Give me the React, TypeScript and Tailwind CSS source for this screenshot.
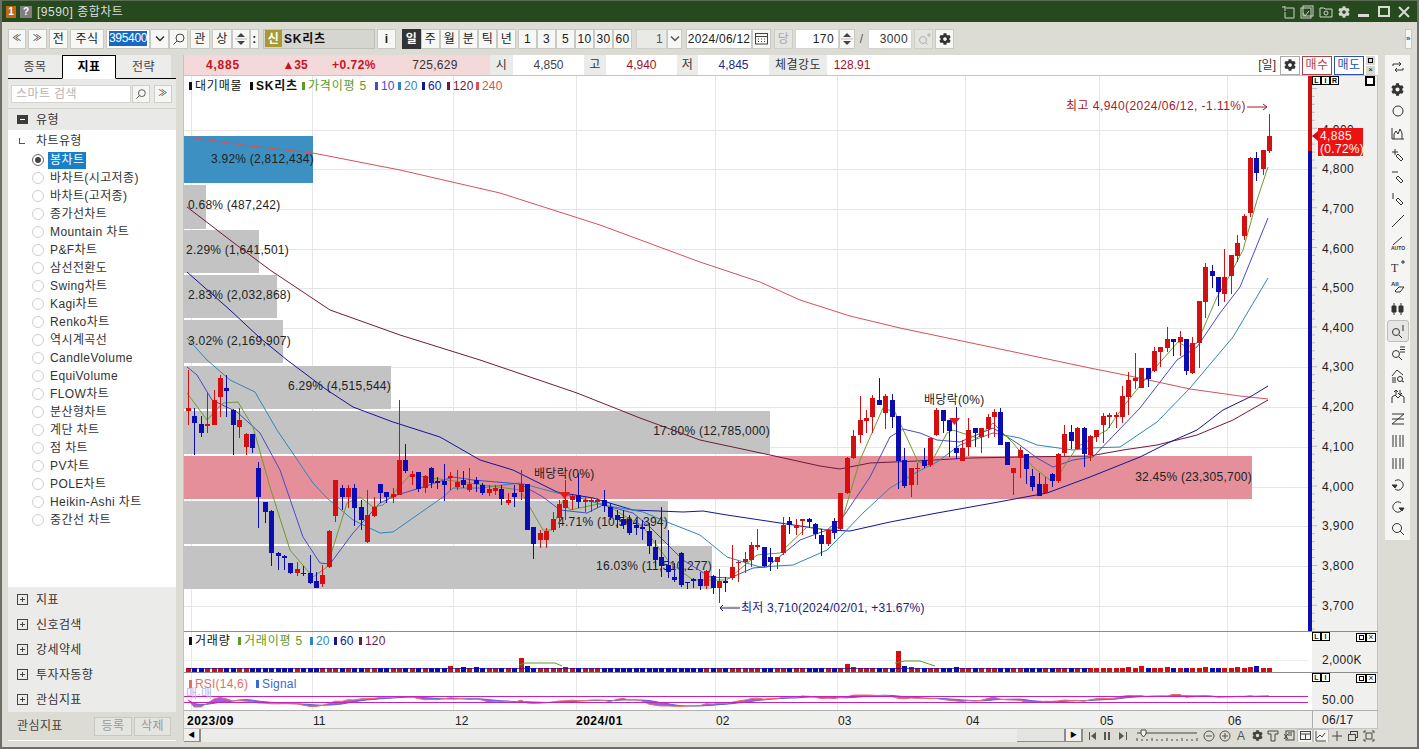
import React from "react";
import { FaCog } from "react-icons/fa";

const cx = (n: number) => Math.round(188 + 6.397 * (n - 1));
type C = { n: number; r: boolean; h: number; t: number; b: number; l: number };
const parse = (y0: number, s: string): Omit<C, "n">[] =>
  s.trim().split(";").filter(Boolean).map((it) => {
    const p = it.trim().split(/\s+/);
    const v = p.slice(1).map((q) => y0 + Number(q) / 3);
    return { r: p[0] === "R", h: v[0], t: v[1], b: v[2], l: v[3] };
  });
const raw = [
  ...parse(360, `R 30 145 153 195;B 145 168 188 285;B 168 192 218 232;R 100 192 193 220;R 90 120 195 195;R 45 53 110 170;B 45 85 93 170;B 148 150 195 285;R 145 180 200 235;R 220 222 260 285;B 222 222 265 278;B 305 323 410 505;B 425 427 455 490;B 450 452 580 618;B 575 578 587 630;B 585 587 593 630;B 608 610 640 642;R 605 628 640 648;B 618 638 642 648;B 585 640 670 672;B 635 663 683 683;R 615 645 672 680;R 510 513 622 625;R 360 360 468 487;B 375 385 410 450;R 375 385 412 445;B 372 383 443 497;B 420 442 480 510;R 390 465 545 548;R 410 440 468 470;B 372 372 398 430;B 395 396 412 430;R 385 402 410 430;R 120 300 405 405;B 252 300 333 340;R 333 343 350 375;B 336 336 388 395;R 345 348 385 398;B 322 324 370 385;B 350 363 367 388;B 312 363 374 422;R 335 349 354 390;R 330 365 380 390;B 332 360 375 385;R 325 372 390 395;B 350 360 373 395;B 368 375 400 405;R 375 388 398 408;R 375 384 392 405;B 375 386 416 435;R 400 421 430 435;B 375 398 410 440;R 330 372 397 420;B 372 372 510 510;B 500 502 552 598;R 510 518 540 565;R 505 512 540 565;R 455 476 510 515;R 420 432 475 505;R 360 420 443 480;R 405 408 420 450;B 340 405 425 445`),
  ...parse(470, `R 80 90 97 125;R 80 90 97 125;R 85 90 93 115;B 60 90 108 125;B 100 110 140 150;B 120 135 150 175;B 120 148 165 178;B 135 148 188 195;B 150 165 175 195;B 150 172 178 210;B 160 183 228 252;B 210 230 270 290;B 110 260 287 320;B 180 285 305 325;B 280 320 330 335;B 245 248 345 350;B 335 335 337 358;B 325 328 332 355;B 305 328 347 360;R 300 303 347 358;B 315 318 353 372;R 298 333 355 400;B 320 332 340 365;R 225 292 325 330;R 272 275 280 335;R 245 268 277 310;R 215 225 270 290;R 178 225 227 240;B 232 232 288 292;B 235 262 275 302;R 262 262 275 298;R 140 165 250 256;B 142 153 165 192;R 148 168 172 195;R 148 148 151 195;B 143 148 155 175;B 158 162 192 208;B 178 195 222 258;R 178 180 222 228;B 145 153 188 208;R 68 68 178 180`),
  ...parse(370, `R 262 265 370 372;R 180 197 265 268;R 78 150 195 218;R 120 143 153 188;R 75 84 140 188;B 25 90 104 104;R 72 78 130 178;B 72 90 140 175;B 138 138 272 358;B 235 270 348 355;R 295 295 345 382;R 280 293 295 345;B 235 270 288 295;R 205 205 285 290;R 115 120 195 198;B 120 120 152 190;B 150 150 183 260;B 110 235 248 268;R 210 235 272 272;R 145 180 230 258;B 175 175 190 230;R 175 175 200 248;R 132 140 178 205;R 118 125 140 200;B 115 125 225 225;B 215 215 285 285;R 295 295 308 375;R 230 240 265 325;B 252 252 296 342;B 296 318 352 362;B 310 342 378 378;R 320 343 370 370;B 310 312 333 350;R 250 252 332 338;R 165 192 248 258;B 165 186 212 238;R 170 175 236 238;B 170 175 253 290;R 195 198 256 272`),
  ...parse(100, `R 990 990 1010 1025;R 938 948 975 1030;R 938 946 949 985;R 935 946 949 985;R 858 888 950 968;R 815 840 890 945;R 760 835 842 868;R 805 805 865 865;B 805 805 838 860;R 742 753 812 815;R 740 742 755 800;R 682 717 745 757;B 718 718 725 768;R 693 712 725 768;B 718 718 812 825;R 712 730 820 822;R 603 603 730 805;R 490 502 605 655;B 495 513 527 565;B 532 532 575 618;R 448 532 582 605;R 465 465 527 582;R 405 430 468 485;R 343 348 408 420;R 172 175 340 350;B 155 175 218 243;R 150 150 207 225;R 42 108 152 158`),
];
const candles: C[] = raw.map((c, i) => ({ ...c, n: i + 1 }));

const ma240 = "188,137 250,146 313,153 400,170 500,193 600,225 700,262 760,282 800,300 850,316 900,328 1000,349 1090,368 1130,376 1190,389 1240,396 1268,399";
const ma120 = "187,207 230,240 270,270 330,310 400,335 480,360 577,393 640,418 700,440 770,455 820,466 840,469 870,463 917,461 970,458 1020,457 1090,456 1123,450 1157,445 1197,435 1233,420 1268,400";
const ma60 = "187,272 230,310 260,338 287,360 327,390 353,407 393,422 440,437 480,460 513,470 557,492 593,498 633,510 683,512 703,511 727,515 780,523 827,530 850,531 890,522 937,513 993,503 1047,493 1090,477 1140,457 1170,442 1197,430 1223,410 1250,397 1268,386";
const ma20 = "187,338 207,360 230,380 255,392 277,430 313,483 327,498 353,520 380,533 393,532 413,518 443,497 453,488 480,488 520,483 557,493 580,498 603,505 643,512 667,522 700,535 727,557 760,567 793,565 827,550 837,540 863,513 890,488 917,472 937,462 960,445 993,433 1020,438 1037,445 1073,450 1090,448 1120,447 1157,422 1190,388 1233,337 1268,278";
const ma10 = "187,367 197,375 212,400 237,412 260,433 280,470 303,537 320,563 330,564 353,533 380,503 397,495 420,488 453,477 473,480 520,484 543,497 560,510 587,513 603,505 633,513 650,527 683,560 710,577 730,578 753,568 767,567 800,540 827,530 843,517 870,477 890,437 903,429 920,433 937,440 960,442 993,428 1017,443 1037,458 1053,467 1073,460 1093,457 1140,408 1177,360 1197,347 1220,313 1240,287 1268,218";
const ma5 = "187,393 207,420 223,403 238,402 253,427 270,487 290,550 313,577 327,567 347,503 360,497 373,507 383,505 410,475 447,480 520,490 543,530 552,530 563,500 570,510 603,503 643,527 670,563 693,580 727,580 757,555 780,553 807,527 827,530 840,527 860,460 883,408 895,412 918,462 930,465 947,433 953,430 977,438 993,423 1013,443 1033,467 1050,480 1060,473 1077,447 1107,430 1123,407 1147,377 1178,342 1187,347 1197,343 1217,297 1230,275 1243,250 1257,200 1268,167";

const bands = [
  { y: 136, h: 47, x2: 313, c: "#3d91c2" },
  { y: 185, h: 44, x2: 206, c: "#c3c3c3" },
  { y: 230, h: 43, x2: 259, c: "#c3c3c3" },
  { y: 275, h: 43, x2: 277, c: "#c3c3c3" },
  { y: 320, h: 43, x2: 283, c: "#c3c3c3" },
  { y: 366, h: 43, x2: 391, c: "#c3c3c3" },
  { y: 411, h: 43, x2: 770, c: "#c3c3c3" },
  { y: 456, h: 43, x2: 1252, c: "#e48f9a" },
  { y: 501, h: 43, x2: 668, c: "#c3c3c3" },
  { y: 546, h: 43, x2: 712, c: "#c3c3c3" },
];
const bandLabels: [number, number, string, "start" | "end"][] = [
  [211, 163, "3.92% (2,812,434)", "start"],
  [188, 209, "0.68% (487,242)", "start"],
  [186, 254, "2.29% (1,641,501)", "start"],
  [188, 299, "2.83% (2,032,868)", "start"],
  [188, 345, "3.02% (2,169,907)", "start"],
  [391, 390, "6.29% (4,515,544)", "end"],
  [770, 435, "17.80% (12,785,000)", "end"],
  [1252, 481, "32.45% (23,305,700)", "end"],
  [668, 526, "4.71% (10,564,394)", "end"],
  [712, 570, "16.03% (11,510,277)", "end"],
];
const vgrid = [191, 312, 453, 576, 715, 837, 965, 1099, 1227];
const hgrid = [130, 169, 209, 249, 288, 328, 367, 407, 447, 487, 526, 566, 606];
const prices: [string, number][] = [["4,900", 130], ["4,800", 169], ["4,700", 209], ["4,600", 249], ["4,500", 288], ["4,400", 328], ["4,300", 367], ["4,200", 407], ["4,100", 447], ["4,000", 487], ["3,900", 526], ["3,800", 566], ["3,700", 606]];

const vols: Record<number, number> = { 42: 6, 44: 5, 46: 5, 53: 14, 54: 6, 60: 5, 104: 8, 105: 5, 112: 21, 113: 6, 114: 5, 121: 5, 148: 5, 150: 6, 154: 5, 160: 5, 165: 5, 167: 5, 168: 6 };

function rsiLines() {
  const cl = candles.map((c) => -(c.r ? c.t : c.b));
  const r: number[] = [];
  for (let i = 0; i < cl.length; i++) {
    let u = 0, d = 0;
    for (let j = Math.max(1, i - 13); j <= i; j++) {
      const x = cl[j] - cl[j - 1];
      if (x > 0) u += x; else d -= x;
    }
    r.push(u + d === 0 ? 50 : (100 * u) / (u + d));
  }
  const s = r.map((_, i) => {
    const a = r.slice(Math.max(0, i - 5), i + 1);
    return a.reduce((p, q) => p + q, 0) / a.length;
  });
  const y = (v: number) => Math.max(694, Math.min(708, 700 - (v - 50) * 0.14));
  return { r: candles.map((c, i) => [cx(c.n), y(r[i])]), s: candles.map((c, i) => [cx(c.n), y(s[i])]) };
}

function Btn({ w, children, dark, muted }: { w: string; children?: React.ReactNode; dark?: boolean; muted?: boolean }) {
  return (
    <div className={`${w} h-[20px] shrink-0 flex items-center justify-center border text-[12px] ${dark ? "bg-[#333333] border-[#333333] text-white font-bold" : muted ? "bg-[#e4e4e0] border-[#cfcfca] text-[#aaaaaa]" : "bg-[#f7f7f5] border-[#c9c9c4] text-[#222222]"}`}>
      {children}
    </div>
  );
}
const Mag = ({ s = 14 }: { s?: number }) => (
  <svg width={s} height={s} viewBox="0 0 14 14" fill="none" stroke="#444" strokeWidth="1"><circle cx="8" cy="6" r="4" /><path d="M5 9 1.5 12.5" /></svg>
);
const Chev = ({ c = "#333" }: { c?: string }) => (
  <svg width="10" height="7" viewBox="0 0 10 7" fill="none" stroke={c} strokeWidth="1.5"><path d="M1 1.5 5 5.5 9 1.5" /></svg>
);
const UpDown = () => (
  <svg width="12" height="16" viewBox="0 0 12 16" fill="#444"><path d="M6 2 10 6H2Z" /><path d="M6 14 2 10H10Z" /><path d="M0 8H12" stroke="#bbb" /></svg>
);
const Plus = () => (
  <svg width="11" height="11" viewBox="0 0 11 11" fill="none" stroke="#444"><rect x=".5" y=".5" width="10" height="10" /><path d="M3 5.500H8M5.500 3V8" /></svg>
);

const treeItems = ["봉차트", "바차트(시고저종)", "바차트(고저종)", "종가선차트", "Mountain 차트", "P&F차트", "삼선전환도", "Swing차트", "Kagi차트", "Renko차트", "역시계곡선", "CandleVolume", "EquiVolume", "FLOW차트", "분산형차트", "계단 차트", "점 차트", "PV차트", "POLE차트", "Heikin-Ashi 차트", "중간선 차트"];

function LeftPanel() {
  return (
    <div className="w-[168px] ml-[6px] shrink-0 flex flex-col text-[12px] text-[#333333] tracking-[0.4px]">
      <div className="h-[24px] flex border-b border-black">
        <div className="w-[54px] bg-[#ececea] flex items-center justify-center text-[#444444]">종목</div>
        <div className="w-[54px] h-[24px] bg-white border border-black border-b-white flex items-center justify-center font-bold text-black">지표</div>
        <div className="w-[55px] bg-[#ececea] flex items-center justify-center text-[#444444]">전략</div>
      </div>
      <div className="h-[29px] bg-[#e8e8e6] flex items-center pl-[3px] gap-[1px]">
        <div className="w-[120px] h-[18px] bg-white border border-[#d4d4d0] flex items-center pl-[4px] text-[#b4b4b4]">스마트 검색</div>
        <div className="w-[18px] h-[18px] bg-[#f6f6f4] border border-[#cfcfca] flex items-center justify-center"><Mag s={12} /></div>
        <div className="w-[18px] h-[18px] ml-[3px] bg-[#f6f6f4] border border-[#cfcfca] flex items-center justify-center text-[9px] leading-none">≫</div>
      </div>
      <div className="h-[22px] bg-[#e9e9e7] border-t border-[#d0d0cc] flex items-center pl-[9px] gap-[8px]">
        <div className="relative w-[11px] h-[9px] bg-[#3c3c3c] flex items-center justify-center"><div className="w-[5px] h-[1px] bg-white" /></div>
        <span>유형</span>
      </div>
      <div className="h-[457px] bg-white flex flex-col">
        <div className="h-[21px] pt-[1px] flex items-center pl-[11px] gap-[8px]">
          <div className="w-[6px] h-[6px] border-l border-b border-[#555555]" />
          <span className="ml-[3px]">차트유형</span>
        </div>
        {treeItems.map((t, i) => (
          <div key={t} className="h-[18px] shrink-0 flex items-center pl-[24px]">
            <div className={`w-[12px] h-[12px] rounded-full border flex items-center justify-center ${i === 0 ? "border-[#666666]" : "border-[#cfcfcf]"}`}>
              {i === 0 && <div className="w-[6px] h-[6px] rounded-full bg-[#444444]" />}
            </div>
            <span className={`ml-[4px] px-[2px] leading-[17px] ${i === 0 ? "bg-[#1a7fc9] text-white" : ""}`}>{t}</span>
          </div>
        ))}
      </div>
      <div className="h-[125px] bg-[#ebebe9] flex flex-col">
        {["지표", "신호검색", "강세약세", "투자자동향", "관심지표"].map((t) => (
          <div key={t} className="h-[25px] flex items-center pl-[9px] gap-[8px]"><Plus /><span>{t}</span></div>
        ))}
      </div>
      <div className="h-[28px] bg-[#dcdcd5] flex items-center pl-[9px] text-[#444444]">
        <span className="w-[47px] shrink-0 whitespace-nowrap">관심지표</span>
        <div className="ml-[30px] flex gap-[2px]">
          <div className="w-[38px] h-[19px] border border-[#c8c8c4] bg-[#e4e4e0] text-[#999999] flex items-center justify-center">등록</div>
          <div className="w-[37px] h-[19px] border border-[#c8c8c4] bg-[#e4e4e0] text-[#999999] flex items-center justify-center">삭제</div>
        </div>
      </div>
      <div className="h-[1px] bg-white" />
    </div>
  );
}

function TitleBar() {
  return (
    <div className="h-[22px] shrink-0 bg-[#264a1e] border-t border-[#5b6b55] flex items-center pl-[4px] pr-[7px] text-[12px] text-[#dddddd]">
      <div className="w-[10px] h-[12px] bg-[#c06a10] text-white font-bold text-[10px] flex items-center justify-center">1</div>
      <div className="w-[12px] h-[12px] ml-[4px] bg-[#808080] text-white font-bold text-[10px] flex items-center justify-center">?</div>
      <span className="ml-[5px] tracking-[0.5px]">[9590] 종합차트</span>
      <div className="ml-auto flex items-center gap-[5px]">
        <svg width="14" height="14" viewBox="0 0 14 14" fill="none" stroke="#cfd4cc"><path d="M1 2h3M4 1v5M5 3h8v10H4V7" /></svg>
        <svg width="14" height="14" viewBox="0 0 14 14" fill="none" stroke="#cfd4cc"><rect x="3" y="1" width="10" height="10" /><rect x="1" y="3" width="10" height="10" /><path d="m3 8 2 3 4-5" /></svg>
        <svg width="14" height="14" viewBox="0 0 14 14" fill="none" stroke="#cfd4cc"><path d="M1 3h4l1 1h7v8H1Z" /><circle cx="7" cy="8" r="2" /></svg>
        <FaCog size={12} color="#cfd4cc" />
        <svg className="ml-[3px]" width="12" height="12" viewBox="0 0 12 12" fill="#d8dcd4"><rect y="8" width="11" height="3" /></svg>
        <svg className="ml-[3px]" width="12" height="12" viewBox="0 0 12 12" fill="none" stroke="#d8dcd4" strokeWidth="2"><rect x="1" y="1" width="10" height="9" /></svg>
        <svg className="ml-[3px]" width="12" height="12" viewBox="0 0 12 12" fill="none" stroke="#d8dcd4" strokeWidth="2"><path d="M1 1 11 11M11 1 1 11" /></svg>
      </div>
    </div>
  );
}

function Toolbar() {
  return (
    <div className="h-[33px] shrink-0 flex items-center pl-[6px] pr-[5px] tracking-[0.4px]">
      <div className="flex items-center gap-[2px]">
        <Btn w="w-[18px]"><span className="text-[9px]">≪</span></Btn>
        <Btn w="w-[19px]"><span className="text-[9px]">≫</span></Btn>
        <Btn w="w-[19px]">전</Btn>
        <Btn w="w-[34px]">주식</Btn>
      </div>
      <div className="w-[44px] h-[20px] ml-[2px] bg-white border border-[#c9c9c4] flex items-center pl-[2px] overflow-hidden shrink-0">
        <span className="bg-[#1668c8] text-white text-[12px] leading-[15px] tracking-[-0.3px]">395400</span>
      </div>
      <Btn w="w-[19px]"><Chev /></Btn>
      <Btn w="w-[19px]"><Mag /></Btn>
      <div className="flex items-center gap-[2px] ml-[2px]">
        <Btn w="w-[20px]">관</Btn>
        <Btn w="w-[20px]">상</Btn>
      </div>
      <Btn w="w-[18px]"><UpDown /></Btn>
      <Btn w="w-[9px]"><span className="font-bold leading-none">:</span></Btn>
      <div className="w-[112px] h-[20px] ml-[4px] shrink-0 bg-[#d6d6d0] border border-[#c0c0ba] flex items-center pl-[1px] gap-[2px] text-[12px]">
        <div className="w-[17px] h-[17px] bg-[#a89a32] text-white font-bold flex items-center justify-center">신</div>
        <span className="font-bold text-[#111111] tracking-[0.8px]">SK리츠</span>
      </div>
      <div className="ml-[2px] flex"><Btn w="w-[19px]"><span className="font-bold">i</span></Btn></div>
      <div className="ml-[6px] flex">
        <Btn w="w-[19px]" dark>일</Btn>
        <Btn w="w-[19px]">주</Btn>
        <Btn w="w-[19px]">월</Btn>
        <Btn w="w-[19px]">분</Btn>
        <Btn w="w-[19px]">틱</Btn>
        <Btn w="w-[19px]">년</Btn>
      </div>
      <div className="ml-[2px] flex">
        {["1", "3", "5", "10", "30", "60"].map((t) => <Btn key={t} w="w-[19px]">{t}</Btn>)}
      </div>
      <div className="w-[31px] h-[20px] ml-[4px] shrink-0 bg-[#e9e9e6] border border-[#d0d0cc] flex items-center justify-end pr-[3px] text-[12px] text-[#555555]">1</div>
      <Btn w="w-[15px]"><Chev c="#555" /></Btn>
      <div className="w-[66px] h-[20px] ml-[4px] shrink-0 bg-white border border-[#c9c9c4] flex items-center justify-center text-[12px] text-[#222222] tracking-[0.25px]">2024/06/12</div>
      <Btn w="w-[19px]">
        <svg width="13" height="13" viewBox="0 0 13 13" fill="none" stroke="#444"><rect x=".5" y="1.5" width="12" height="10.5" /><path d="M.5 4.5h12M3 7h1M6 7h1M9 7h1M3 9.500h1M6 9.500h1M9 9.500h1" /></svg>
      </Btn>
      <div className="ml-[3px] flex"><Btn w="w-[19px]" muted>당</Btn></div>
      <div className="w-[44px] h-[20px] ml-[2px] shrink-0 bg-white border border-[#d4d4d0] flex items-center justify-end pr-[4px] text-[12px] text-[#222222]">170</div>
      <Btn w="w-[16px]"><UpDown /></Btn>
      <span className="w-[13px] text-center text-[12px] text-[#555555]">/</span>
      <div className="w-[44px] h-[20px] shrink-0 bg-white border border-[#d4d4d0] flex items-center justify-end pr-[3px] text-[12px] text-[#333333]">3000</div>
      <div className="ml-[2px] flex">
        <Btn w="w-[19px]" muted>
          <svg width="14" height="14" viewBox="0 0 14 14" fill="none" stroke="#b0b0b0"><circle cx="6" cy="8" r="3.500" /><path d="m8.500 10.500 2 2M10 3h4M12 1v4" /></svg>
        </Btn>
      </div>
      <div className="ml-[2px] flex"><Btn w="w-[19px]"><FaCog size={12} color="#333" /></Btn></div>
      <div className="ml-auto w-[7px] h-[20px] bg-[#f7f7f5] border border-[#c9c9c4] text-[8px] flex items-center justify-center">»</div>
    </div>
  );
}

function InfoRow() {
  const Lab = ({ w, t }: { w: string; t: string }) => <div className={`${w} h-full bg-[#ebebe9] flex items-center justify-center text-[#333333] tracking-[0.5px]`}>{t}</div>;
  const Val = ({ w, t, c }: { w: string; t: string; c: string }) => <div className={`${w} h-full flex items-center justify-center ${c}`}>{t}</div>;
  return (
    <div className="h-[21px] shrink-0 flex items-center bg-white border-b border-[#c4c4c0] text-[12px]">
      <div className="w-[306px] h-full bg-[#f4d9da] flex items-center">
        <span className="w-[78px] text-center font-bold text-[#c8141e] tracking-[0.8px]">4,885</span>
        <span className="w-[58px] text-center font-bold text-[#c8141e] pl-[8px]">▲35</span>
        <span className="w-[68px] text-center font-bold text-[#c8141e] tracking-[0.5px]">+0.72%</span>
        <span className="w-[74px] text-center text-[#333333] tracking-[0.3px] pl-[20px]">725,629</span>
      </div>
      <Lab w="w-[23px]" t="시" />
      <Val w="w-[71px]" t="4,850" c="text-[#444444]" />
      <Lab w="w-[22px]" t="고" />
      <Val w="w-[71px]" t="4,940" c="text-[#a01028]" />
      <Lab w="w-[21px]" t="저" />
      <Val w="w-[71px]" t="4,845" c="text-[#1a2a90]" />
      <Lab w="w-[58px]" t="체결강도" />
      <Val w="w-[50px]" t="128.91" c="text-[#a01028]" />
      <div className="ml-auto flex items-center h-full">
        <span className="text-[#333333] mr-[4px]">[일]</span>
        <div className="w-[20px] h-[19px] border border-[#aaaaaa] flex items-center justify-center"><FaCog size={12} color="#333" /></div>
        <div className="w-[30px] h-[19px] ml-[2px] border border-[#b04048] text-[#b04048] flex items-center justify-center tracking-[0.5px]">매수</div>
        <div className="w-[30px] h-[19px] ml-[2px] border border-[#2a50b0] text-[#2a50b0] flex items-center justify-center tracking-[0.5px]">매도</div>
        <div className="w-[10px] ml-[2px] mr-[2px] flex flex-col gap-[1px]">
          <div className="w-[9px] h-[9px] bg-[#d8d8d4] flex items-center justify-center"><div className="w-[5px] h-[5px] border border-black" /></div>
          <div className="w-[9px] h-[9px] bg-[#d8d8d4] text-[8px] leading-none flex items-center justify-center">×</div>
        </div>
      </div>
    </div>
  );
}

const LIR = ({ t }: { t: string[] }) => (
  <div className="absolute left-0 top-0 flex">
    {t.map((x) => <div key={x} className="w-[9px] h-[9px] border border-black bg-white text-[7px] font-bold leading-none flex items-center justify-center">{x}</div>)}
  </div>
);
const BoxX = () => (
  <div className="absolute right-[1px] top-[1px] flex">
    <div className="w-[10px] h-[9px] border border-black bg-white flex items-center justify-center"><div className="w-[5px] h-[5px] border border-black" /></div>
    <div className="w-[10px] h-[9px] border border-black bg-white text-[9px] leading-none flex items-center justify-center">×</div>
  </div>
);

function Legend({ items, y }: { items: { t: string; c: string; x: number; b?: boolean; k?: boolean }[]; y: number }) {
  return (
    <g>
      {items.map((it) => (
        <g key={it.t}>
          <rect x={it.x} y={y - 8} width="3" height="8" fill={it.c} />
          <text x={it.x + 6} y={y} fill={it.c} fontWeight={it.b ? 700 : 400} fontSize="12" className={it.k ? "tracking-[0.8px]" : "tracking-[0.2px]"}>{it.t}</text>
        </g>
      ))}
    </g>
  );
}

function MainChart() {
  return (
    <div className="h-[555px] shrink-0 flex">
      <svg width="1128" height="555" viewBox="184 76 1128 555" className="block shrink-0">
        <rect x="184" y="76" width="1128" height="555" fill="#fff" />
        {hgrid.map((y) => <path key={y} d={`M184 ${y + .5}H1308`} stroke="#e6e6e6" />)}
        {vgrid.map((x) => <path key={x} d={`M${x + .5} 76V631`} stroke="#e6e6e6" />)}
        {bands.map((b) => <rect key={b.y} x="184" y={b.y} width={b.x2 - 184} height={b.h} fill={b.c} />)}
        <g fontSize="12" fill="#222" className="tracking-[0.25px]">
          {bandLabels.map(([x, y, t, a]) => <text key={t} x={x} y={y} textAnchor={a}>{t}</text>)}
        </g>
        <g fill="none" strokeWidth="1">
          <polyline points={ma240} stroke="#d8505a" />
          <polyline points={ma120} stroke="#6e1a3e" />
          <polyline points={ma60} stroke="#14149a" />
          <polyline points={ma20} stroke="#2f86b8" />
          <polyline points={ma10} stroke="#4a4ac8" />
          <polyline points={ma5} stroke="#6f9a2e" />
        </g>
        <g shapeRendering="crispEdges">
          {candles.map((c) => {
            const x = cx(c.n);
            const col = c.r ? "#d40f0f" : "#0c0cb4";
            return (
              <g key={c.n}>
                <rect x={x} y={c.h} width="1" height={Math.max(1, c.l - c.h)} fill={col} />
                <rect x={x - 2} y={c.t} width="5" height={Math.max(1.5, c.b - c.t)} fill={col} />
              </g>
            );
          })}
        </g>
        <path d="M559 492h11l-5.500 7Z" fill="#e81818" />
        <path d="M949 418h11l-5.500 7Z" fill="#e81818" />
        <g fontSize="12">
          <text x="534" y="478" fill="#222" className="tracking-[0.3px]">배당락(0%)</text>
          <text x="924" y="404" fill="#222" className="tracking-[0.3px]">배당락(0%)</text>
          <text x="1066" y="110" fill="#a01c2c" className="tracking-[0.45px]">최고 4,940(2024/06/12, -1.11%)</text>
          <text x="741" y="612" fill="#1c1c80" className="tracking-[0.2px]">최저 3,710(2024/02/01, +31.67%)</text>
        </g>
        <path d="M1247 107h20m-4-3 4 3-4 3" fill="none" stroke="#a01c2c" />
        <path d="M720 608h20m-17-3-3 3 3 3" fill="none" stroke="#1c1c80" />
        <Legend y={90} items={[{ t: "대기매물", c: "#111", x: 189, k: true }, { t: "SK리츠", c: "#111", x: 250, b: true, k: true }, { t: "가격이평 5", c: "#5d9a2a", x: 302, k: true }, { t: "10", c: "#4a4ac8", x: 375 }, { t: "20", c: "#2f86c0", x: 398 }, { t: "60", c: "#14149a", x: 422 }, { t: "120", c: "#6e1a3e", x: 447 }, { t: "240", c: "#d8505a", x: 476 }]} />
        <rect x="1308" y="76" width="4" height="75" fill="#cc1014" />
        <rect x="1308" y="151" width="4" height="480" fill="#0c0cb0" />
      </svg>
      <div className="relative w-[66px] shrink-0 bg-[#f0f0ee] border-r border-[#c4c4c0]">
        <svg width="66" height="555" viewBox="1312 76 66 555" className="block">
          {Array.from({ length: 69 }).map((_, i) => <path key={i} d={`M1312 ${88.500 + i * 7.95}h${i % 5 === 0 ? 5 : 3}`} stroke="#bcbcbc" />)}
          <g fontSize="12" fill="#222" className="tracking-[0.4px]">
            {prices.map(([t, y]) => <text key={t} x="1322" y={y + 4}>{t}</text>)}
          </g>
          <rect x="1318" y="128" width="45" height="28" fill="#ee1111" />
          <path d="M1312 136l6-5v10Z" fill="#cc1014" />
          <text x="1320" y="140" fontSize="12" fill="#fff" className="tracking-[0.4px]">4,885</text>
          <text x="1320" y="153" fontSize="12" fill="#fff" className="tracking-[0.3px]">(0.72%)</text>
        </svg>
        <LIR t={["L", "I", "R"]} />
        <div className="absolute right-[2px] top-0 w-[10px] h-[10px] border-2 border-black bg-white" />
      </div>
    </div>
  );
}

function VolumePane() {
  return (
    <div className="h-[41px] shrink-0 flex border-t border-[#8c8c8c]">
      <svg width="1128" height="40" viewBox="184 632 1128 40" className="block shrink-0">
        <rect x="184" y="632" width="1128" height="40" fill="#fff" />
        {vgrid.map((x) => <path key={x} d={`M${x + .5} 632V672`} stroke="#e6e6e6" />)}
        <path d="M184 660.500H1308" stroke="#eeeeee" />
        <g shapeRendering="crispEdges">
          {candles.map((c) => {
            const h = vols[c.n] ?? 4;
            const red = c.r || h > 10;
            return <rect key={c.n} x={cx(c.n) - 2} y={672 - h} width="5" height={h} fill={red ? "#d40f0f" : "#0c0cb4"} />;
          })}
        </g>
        <path d="M187 668.500H1090" stroke="#14149a" opacity=".7" />
        <path d="M519 665 525 663H555L562 666M895 663 905 661H920L935 666" fill="none" stroke="#5d9a2a" />
        <Legend y={645} items={[{ t: "거래량", c: "#111", x: 189, k: true }, { t: "거래이평 5", c: "#5d9a2a", x: 238, k: true }, { t: "20", c: "#2f86c0", x: 310 }, { t: "60", c: "#14149a", x: 334 }, { t: "120", c: "#6e1a3e", x: 359 }]} />
      </svg>
      <div className="relative w-[66px] shrink-0 bg-[#f0f0ee] border-r border-[#c4c4c0] text-[12px] text-[#222222]">
        <LIR t={["L", "I"]} />
        <BoxX />
        <span className="absolute left-[10px] top-[19px] tracking-[0.3px]">2,000K</span>
      </div>
    </div>
  );
}

function RsiPane() {
  const { r, s } = rsiLines();
  const poly = [...r, ...[...s].reverse()].map((p) => p.join(",")).join(" ");
  return (
    <div className="h-[38px] shrink-0 flex border-t border-[#8c8c8c]">
      <svg width="1128" height="37" viewBox="184 673 1128 37" className="block shrink-0">
        <rect x="184" y="673" width="1128" height="37" fill="#fff" />
        {vgrid.map((x) => <path key={x} d={`M${x + .5} 673V710`} stroke="#e6e6e6" />)}
        <polygon points={poly} fill="#9a60e0" />
        <polyline points={s.map((p) => p.join(",")).join(" ")} fill="none" stroke="#4a6ad0" />
        <polyline points={r.map((p) => p.join(",")).join(" ")} fill="none" stroke="#e8705a" />
        <path d="M184 696.500H1308M184 702.500H1308" stroke="#c820c0" />
        <text x="186" y="698" fontSize="12" fill="#b8b8ec">매·매</text>
        <Legend y={688} items={[{ t: "RSI(14,6)", c: "#e8705a", x: 189 }, { t: "Signal", c: "#3a6ad0", x: 256 }]} />
      </svg>
      <div className="relative w-[66px] shrink-0 bg-[#f0f0ee] border-r border-[#c4c4c0] text-[12px] text-[#222222]">
        <LIR t={["L", "I"]} />
        <BoxX />
        <span className="absolute left-[10px] top-[18px] tracking-[0.4px]">50.00</span>
      </div>
    </div>
  );
}

function TimeAxis() {
  const labels: [string, string, boolean][] = [["2023/09", "left-[3px]", true], ["11", "left-[129px]", false], ["12", "left-[271px]", false], ["2024/01", "left-[392px]", true], ["02", "left-[532px]", false], ["03", "left-[654px]", false], ["04", "left-[782px]", false], ["05", "left-[916px]", false], ["06", "left-[1044px]", false]];
  return (
    <div className="h-[18px] shrink-0 flex border-t border-[#b0b0b0]">
      <div className="relative w-[1128px] shrink-0 bg-[#efefed] text-[12px] text-[#222222]">
        {labels.map(([t, l, b]) => <span key={t} className={`absolute top-[1px] ${l} ${b ? "font-bold text-black tracking-[0.5px]" : ""}`}>{t}</span>)}
      </div>
      <div className="w-[66px] shrink-0 bg-[#efefed] border-l border-[#b0b0b0] border-r border-r-[#c4c4c0] text-[12px] text-[#222222] flex items-center pl-[9px] tracking-[0.3px]">06/17</div>
    </div>
  );
}

function ScrollBar() {
  const sq = "w-[16px] h-[14px] shrink-0 flex items-center justify-center";
  return (
    <div className="h-[14px] shrink-0 flex items-center bg-[#dcdcd5] border-t border-[#c4c4c0] overflow-hidden">
      <div className="w-[17px] h-full bg-[#f0f0ee] border-r-2 border-b border-[#8c8c88] flex items-center justify-center text-[7px] text-black">◀</div>
      <div className="w-[816px] h-full bg-[#ebebe9]" />
      <div className="w-[49px] h-full bg-[#e4e4e0] border-r-2 border-b border-[#8c8c88]" />
      <div className="w-[17px] h-full bg-[#f0f0ee] border-r-2 border-b border-[#8c8c88] flex items-center justify-center text-[7px] text-black">▶</div>
      <div className="ml-[2px] flex items-center">
        <svg width="60" height="12" viewBox="0 0 60 12" fill="#555" className="mr-[1px]">
          <path d="M4 2h1v8H4ZM11 2 6 6l5 4Z" /><path d="M19 2h2v8h-2ZM23 2h2v8h-2Z" /><path d="M34 2l5 4-5 4ZM41 2h1v8h-1Z" />
        </svg>
        <svg width="66" height="13" viewBox="0 0 66 13" fill="none" stroke="#444" className="-ml-[11px]">
          <path d="M2 4H62" /><path d="M6 1h5v4l-2.500 3L6 5Z" fill="#f4f4f4" /><path d="M2 12V9M7 12v-2M12 12v-2M17 12V9M22 12v-2M27 12v-2M32 12V9M37 12v-2M42 12v-2M47 12V9M52 12v-2M57 12v-2M62 12V9" />
        </svg>
      </div>
      <div className="flex items-center text-[#555555]">
        <div className={sq}><svg width="12" height="12" viewBox="0 0 12 12" fill="none" stroke="#555"><circle cx="6" cy="6" r="5" /><path d="M3 6h6" /></svg></div>
        <div className={sq}><svg width="12" height="12" viewBox="0 0 12 12" fill="none" stroke="#555"><circle cx="6" cy="6" r="5" /><path d="M3 6h6M6 3v6" /></svg></div>
        <div className={`${sq} text-[12px]`}>A</div>
        <div className={sq}><FaCog size={11} color="#444" /></div>
        <div className={sq}><svg width="12" height="12" viewBox="0 0 12 12" fill="none" stroke="#444"><path d="M1 1h10v3H8v7H4V4H1Z" /></svg></div>
        <div className={sq}><svg width="12" height="12" viewBox="0 0 12 12" fill="none" stroke="#444"><rect x="3" y="1" width="8" height="9" /><path d="M5 3h4M5 5h4M1 4l4 5M5 4 1 9" /></svg></div>
        <div className={`${sq} bg-[#f4f4f2] border border-[#c0c0bc]`}><svg width="11" height="11" viewBox="0 0 11 11" fill="none" stroke="#444"><rect x=".5" y="1.500" width="10" height="8" /><path d="M.5 4h10M5.500 4v5" /></svg></div>
        <div className={`${sq} bg-[#f4f4f2] border border-[#c0c0bc]`}><svg width="12" height="12" viewBox="0 0 12 12" fill="none" stroke="#444"><path d="M1 11h10M1 1v10M2 8l3-3 2 2 3-4" /></svg></div>
        <div className={sq}><svg width="12" height="12" viewBox="0 0 12 12" fill="none" stroke="#444"><path d="M6 1v10M1 6h10" /></svg></div>
        <div className={sq}><svg width="12" height="12" viewBox="0 0 12 12" fill="none" stroke="#444"><rect x="3.500" y="1.500" width="7" height="6" /><rect x="1.500" y="4.500" width="7" height="6" fill="#dcdcd5" /></svg></div>
        <div className={sq}><svg width="12" height="12" viewBox="0 0 12 12" fill="none" stroke="#444"><path d="M1 3V1h2M9 1h2v2M11 9v2H9M3 11H1V9" /><rect x="3" y="3" width="6" height="6" /></svg></div>
      </div>
    </div>
  );
}

const toolIcons: React.ReactNode[] = [
  <path d="M3 7V5h8M9 3l2 2-2 2M13 9v2H5M7 13l-2-2 2-2" />,
  <g />,
  <circle cx="8" cy="8" r="5" />,
  <path d="M2 14h12M2 14V3M4 14V9l2-3 2 3 2-5 2 4v6" />,
  <path d="M2 5h6M5 2v6M8 7l5 5-2 2-5-5Z" />,
  <path d="M2 3h6M8 7l5 5-2 2-5-5Z" />,
  <path d="M3 2v6M8 7l5 5-2 2-5-5Z" />,
  <path d="M2 14 14 2" />,
  <><path d="M3 10 12 2" /><text x="1" y="15" fontSize="5" stroke="none" fill="#333" fontWeight="700">AUTO</text></>,
  <><text x="1" y="15" fontSize="12" stroke="none" fill="#333" fontFamily="Liberation Serif">T</text><path d="M11 5h4M13 3v4" /></>,
  <><text x="1" y="7" fontSize="6" stroke="none" fill="#333" fontWeight="700">All</text><path d="M5 12l4-4h5l-4 5H6Z" /></>,
  <path d="M4 2v12M11 2v12M2 5h4v6H2ZM9 5h4v6H9Z" fill="#333" />,
  <><circle cx="6" cy="9" r="3.500" /><path d="m9 12 3 3M13 2v6" /></>,
  <><circle cx="6" cy="9" r="3.500" /><path d="m9 12 3 3M10 2h5M10 4.500h5M10 7h5" /></>,
  <><circle cx="10" cy="12" r="2.500" /><path d="M12 14l2 1M2 9l5-6 6 5M2 11h4M2 13h4M2 15h4" /></>,
  <path d="M2 14V8l3-2 3 3 3-3 3 2v6M6 1v5M4 3l2-2 2 2M10 1v5M8 4l2 2 2-2" />,
  <path d="M2 3h12L2 13h12M2 8h12" />,
  <path d="M3 2v12M6 2v12M10 2v12M13 2v12" />,
  <path d="M3 3v11M6 3v11M10 3v11M13 3v11" />,
  <><path d="M5 4a5 5 0 1 1 0 8" /><path d="M2 8h5L5 11Z" fill="#333" /></>,
  <><path d="M11 4a5 5 0 1 0 0 8" /><path d="M9 9h5l-2 3Z" fill="#333" /></>,
  <><circle cx="7" cy="7" r="4.500" /><path d="m10 10 4 4" /></>,
];

function RightBar() {
  return (
    <div className="w-[25px] ml-[7px] h-[485px] shrink-0 bg-[#f5f5f3] flex flex-col items-center pt-[1px]">
      {toolIcons.map((ic, i) => (
        <React.Fragment key={i}>
          <div className={`w-[22px] h-[22px] shrink-0 flex items-center justify-center ${i === 12 ? "bg-[#e6e6e4] border border-[#bdbdb8] rounded-[3px]" : ""}`}>
            {i === 1 ? <FaCog size={13} color="#333" /> : (
              <svg width="16" height="16" viewBox="0 0 16 16" fill="none" stroke="#333">{ic}</svg>
            )}
          </div>
          {i === 1 && <div className="w-full h-[1px] bg-[#c8c8c4]" />}
        </React.Fragment>
      ))}
    </div>
  );
}

export default function App() {
  return (
    <div className="w-[1419px] h-[749px] overflow-hidden bg-[#dcdcd5] border-x-2 border-b-2 border-[#6e6e68] flex flex-col font-['Liberation_Sans','Noto_Sans_CJK_KR',sans-serif]">
      <TitleBar />
      <Toolbar />
      <div className="flex flex-1 min-h-0">
        <LeftPanel />
        <div className="w-[1195px] ml-[7px] h-[686px] shrink-0 flex flex-col border-l border-[#c4c4c0]">
          <InfoRow />
          <MainChart />
          <VolumePane />
          <RsiPane />
          <TimeAxis />
          <ScrollBar />
        </div>
        <RightBar />
      </div>
    </div>
  );
}
